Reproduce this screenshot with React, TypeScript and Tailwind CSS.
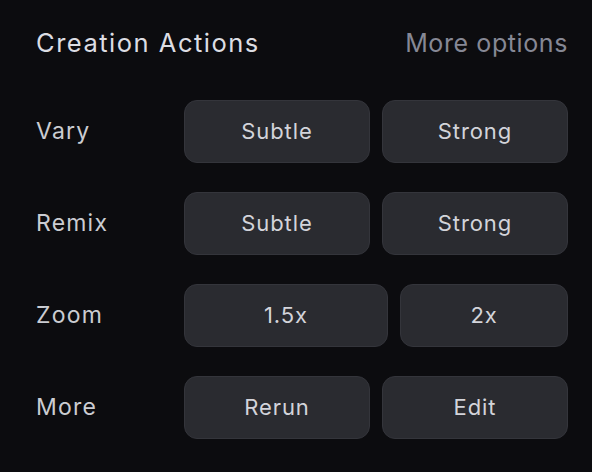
const rows = [
  { label: "Vary", actions: ["Subtle", "Strong"], widths: ["w-[186px]", "w-[186px]"] },
  { label: "Remix", actions: ["Subtle", "Strong"], widths: ["w-[186px]", "w-[186px]"] },
  { label: "Zoom", actions: ["1.5x", "2x"], widths: ["w-[204px]", "w-[168px]"] },
  { label: "More", actions: ["Rerun", "Edit"], widths: ["w-[186px]", "w-[186px]"] },
];

function ActionButton({ text, width }: { text: string; width: string }) {
  return (
    <button
      className={`${width} h-[63px] rounded-[13px] border border-[#34353b] bg-[#2a2b30] text-[22px] tracking-[0.9px] text-[#d3d4da] flex items-center justify-center`}
    >
      {text}
    </button>
  );
}

export default function App() {
  return (
    <div
      className="w-[592px] h-[472px] bg-[#0c0c0f] pl-[36px] pr-[24px] pt-[26px] overflow-hidden"
      style={{ fontFamily: "Inter, 'Noto Sans', sans-serif" }}
    >
      <div className="flex items-center justify-between h-[34px]">
        <h2 className="text-[25.5px] leading-[34px] text-[#dcdde3] tracking-[1.5px]">Creation Actions</h2>
        <span className="text-[25px] leading-[34px] text-[#868895] tracking-[0.6px]">More options</span>
      </div>
      <div className="mt-[40px] flex flex-col gap-[29px]">
        {rows.map((row) => (
          <div key={row.label} className="flex items-center">
            <div className="w-[148px] text-[23px] tracking-[1.2px] text-[#cbccd2]">{row.label}</div>
            <div className="flex gap-[12px]">
              {row.actions.map((a, i) => (
                <ActionButton key={a} text={a} width={row.widths[i]} />
              ))}
            </div>
          </div>
        ))}
      </div>
    </div>
  );
}
